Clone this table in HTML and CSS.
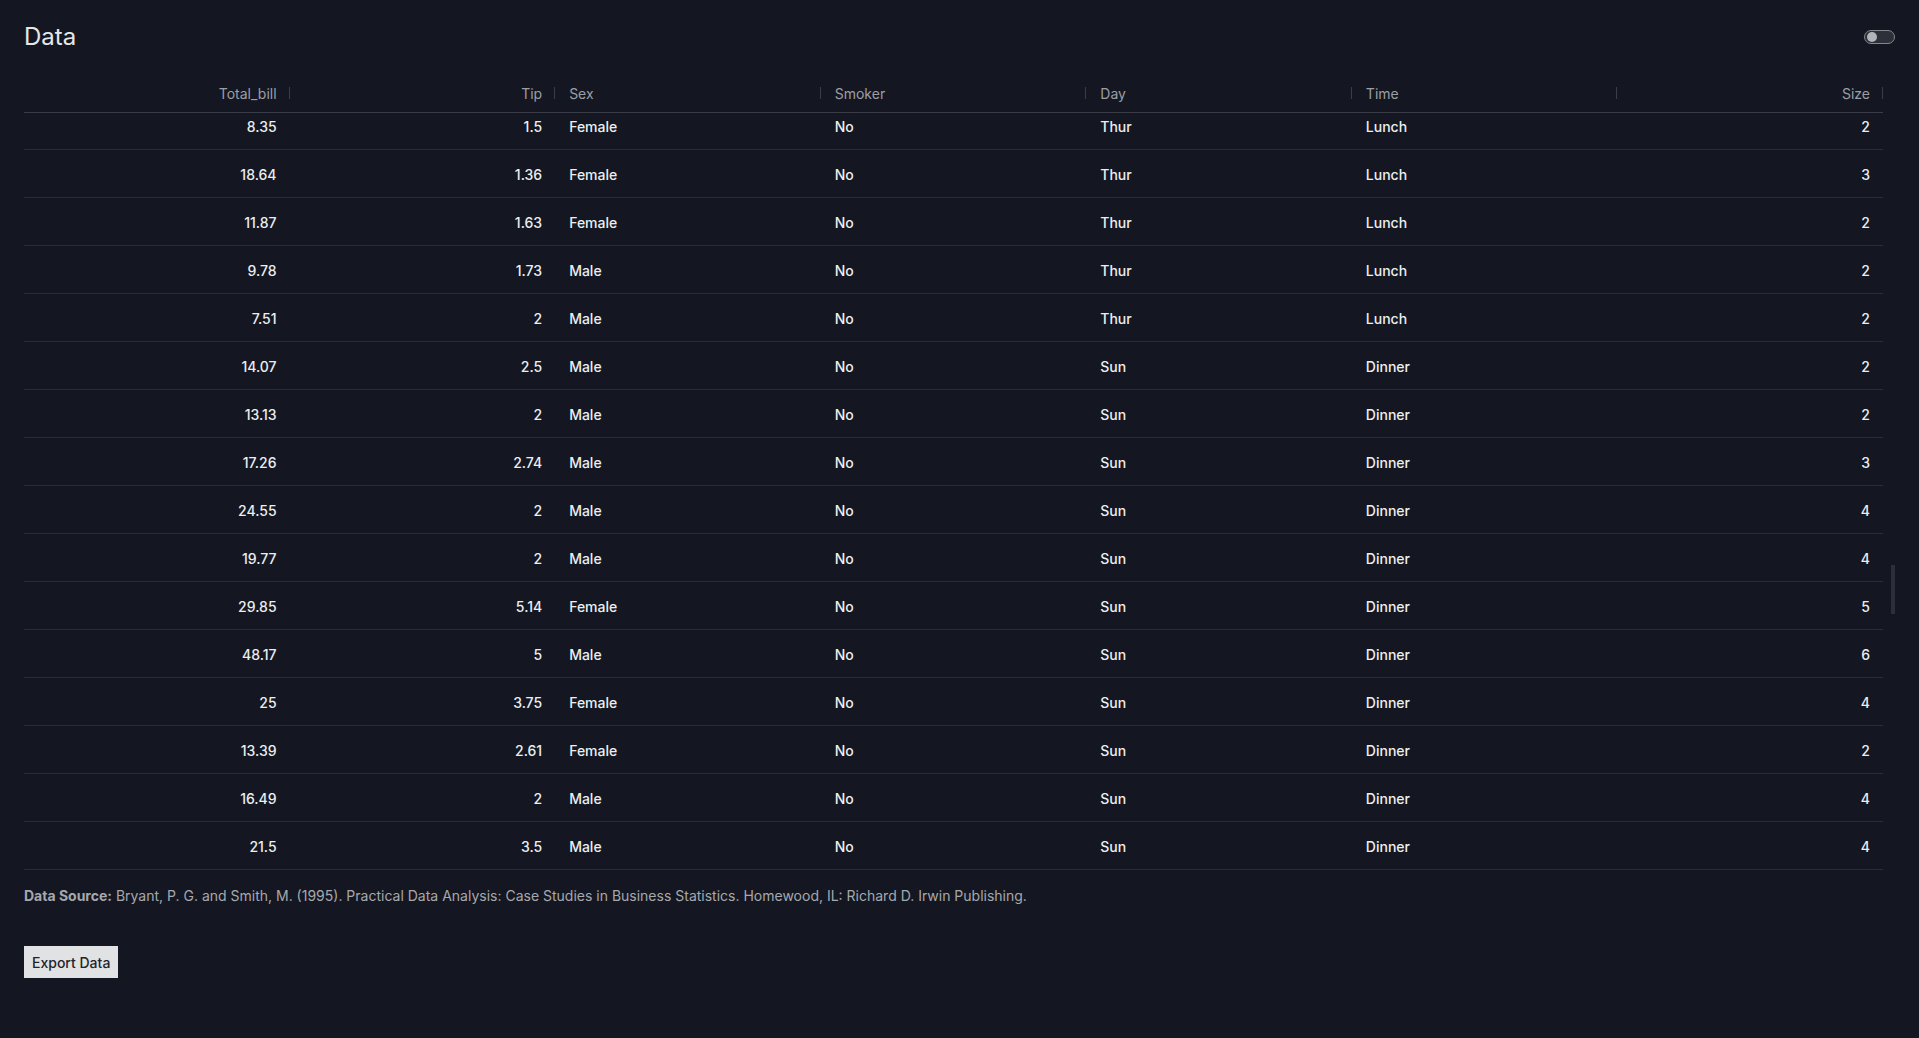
FILE: index.html
```html
<!DOCTYPE html>
<html lang="en">
<head>
    <meta charset="UTF-8">
    <title>Data</title>
    <meta name="viewport" content="width=device-width, initial-scale=1">
    <link rel="stylesheet" href="styles.css">
</head>
<body>
    <div class="topbar">
        <h1>Data</h1>
        <span class="toggle"><span class="knob"></span></span>
    </div>

    <div class="table-wrap">
        <div class="grid-head">
            <div class="th num">Total_bill</div>
            <div class="th num">Tip</div>
            <div class="th">Sex</div>
            <div class="th">Smoker</div>
            <div class="th">Day</div>
            <div class="th">Time</div>
            <div class="th num">Size</div>
        </div>
        <div class="grid-body">
            <div class="rows" id="rows"></div>
        </div>
        <div class="scroll-thumb"></div>
    </div>

    <p class="source"><b>Data Source:</b> Bryant, P. G. and Smith, M. (1995). Practical Data Analysis: Case Studies in Business Statistics. Homewood, IL: Richard D. Irwin Publishing.</p>

    <button class="export">Export Data</button>

    <script>
        // filas visibles del dataset "tips"
        const data = [
            ['8.35', '1.5', 'Female', 'No', 'Thur', 'Lunch', '2'],
            ['18.64', '1.36', 'Female', 'No', 'Thur', 'Lunch', '3'],
            ['11.87', '1.63', 'Female', 'No', 'Thur', 'Lunch', '2'],
            ['9.78', '1.73', 'Male', 'No', 'Thur', 'Lunch', '2'],
            ['7.51', '2', 'Male', 'No', 'Thur', 'Lunch', '2'],
            ['14.07', '2.5', 'Male', 'No', 'Sun', 'Dinner', '2'],
            ['13.13', '2', 'Male', 'No', 'Sun', 'Dinner', '2'],
            ['17.26', '2.74', 'Male', 'No', 'Sun', 'Dinner', '3'],
            ['24.55', '2', 'Male', 'No', 'Sun', 'Dinner', '4'],
            ['19.77', '2', 'Male', 'No', 'Sun', 'Dinner', '4'],
            ['29.85', '5.14', 'Female', 'No', 'Sun', 'Dinner', '5'],
            ['48.17', '5', 'Male', 'No', 'Sun', 'Dinner', '6'],
            ['25', '3.75', 'Female', 'No', 'Sun', 'Dinner', '4'],
            ['13.39', '2.61', 'Female', 'No', 'Sun', 'Dinner', '2'],
            ['16.49', '2', 'Male', 'No', 'Sun', 'Dinner', '4'],
            ['21.5', '3.5', 'Male', 'No', 'Sun', 'Dinner', '4']
        ];
        const numeric = [true, true, false, false, false, false, true];
        const rows = document.getElementById('rows');

        data.forEach(function(r) {
            const row = document.createElement('div');
            row.className = 'row';
            r.forEach(function(val, i) {
                const cell = document.createElement('div');
                cell.className = numeric[i] ? 'td num' : 'td';
                cell.textContent = val;
                row.appendChild(cell);
            });
            rows.appendChild(row);
        });
    </script>
</body>
</html>
```

FILE: styles.css
```css
body {
    margin: 0;
    padding: 0 24px;
    background: #141721;
    color: #e6e7ea;
    font-family: 'Inter', 'Noto Sans', sans-serif;
    font-size: 14px;
}
.topbar {
    display: flex;
    align-items: center;
    justify-content: space-between;
    height: 74px;
}
h1 {
    margin: 0 0 2px 0;
    font-size: 24px;
    font-weight: 400;
    color: #e6e7ea;
}
.toggle {
    position: relative;
    display: block;
    width: 29px;
    height: 12px;
    border: 1.5px solid #85878e;
    border-radius: 10px;
    background: #2d2f39;
}
.toggle .knob {
    position: absolute;
    left: 1.5px;
    top: 1px;
    width: 10px;
    height: 10px;
    border-radius: 50%;
    background: #b3b4b9;
}
.table-wrap {
    position: relative;
    padding-right: 12px;
}
.grid-head,
.row {
    display: grid;
    grid-template-columns: repeat(7, 1fr);
}
.grid-head {
    height: 38px;
    border-bottom: 1px solid #3a3d47;
    color: #9c9ea6;
}
.th {
    position: relative;
    display: flex;
    align-items: center;
    padding: 0 13px 0 14px;
}
.th::after {
    content: "";
    position: absolute;
    right: 0;
    top: 13px;
    width: 1px;
    height: 12px;
    background: #3a3d47;
}
.th.num,
.td.num {
    justify-content: flex-end;
}
.grid-body {
    height: 757px;
    overflow: hidden;
}
.rows {
    margin-top: -11px;
}
.row {
    height: 47px;
    border-bottom: 1px solid #2a2d37;
}
.td {
    display: flex;
    align-items: center;
    padding: 2px 13px 0 14px;
    font-weight: 500;
    color: #eceef0;
}
.scroll-thumb {
    position: absolute;
    right: 0;
    top: 491px;
    width: 4px;
    height: 49px;
    background: #2c2f3a;
}
.source {
    margin: 16px 0 0 0;
    line-height: 20px;
    color: #a6a8ae;
}
.source b {
    font-weight: 700;
}
.export {
    margin-top: 40px;
    height: 32px;
    padding: 0 8px;
    border: none;
    border-radius: 0;
    background: #e1e2e4;
    color: #22242a;
    font-family: 'Inter', 'Noto Sans', sans-serif;
    font-size: 14px;
    font-weight: 500;
    cursor: pointer;
}
```
